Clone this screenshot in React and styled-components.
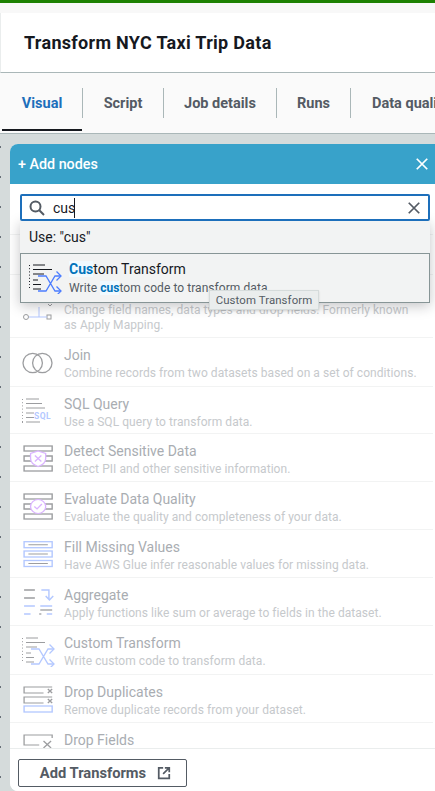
import React from "react";
import styled, { createGlobalStyle } from "styled-components";

const Global = createGlobalStyle`
  html, body { margin: 0; padding: 0; height: 100%; overflow: hidden; background: #fff; }
  #root { height: 791px; }
  * { box-sizing: border-box; }
`;

const FONT = `Roboto, "Liberation Sans", Arial, sans-serif`;

const Page = styled.div`
  width: 435px; height: 791px; overflow: hidden; display: flex; flex-direction: column;
  font-family: ${FONT}; color: #16191f; background: #fff;
`;
const GreenBar = styled.div`height: 3px; flex: none; background: #1d8102;`;
const Strip = styled.div`height: 10px; flex: none; background: #f8f8f8;`;
const TitleBar = styled.header`
  height: 60px; flex: none; padding: 0 0 0 23px; display: flex; align-items: center;
  border-left: 1px solid #eaeded; border-bottom: 1px solid #aab7b8; background: #fff;
`;
const Title = styled.h1`margin: 0; font-size: 18px; letter-spacing: .3px; font-weight: 700; line-height: 24px; color: #16191f; white-space: nowrap;`;
const Tabs = styled.nav`
  height: 61px; flex: none; display: flex; align-items: flex-start; padding: 15px 0 0 2px; overflow: hidden;
  background: #fafafa; border-bottom: 1px solid #aab7b8; position: relative;
`;
const Tab = styled.div`
  height: 30px; flex: none; width: ${p => p.$w}px; display: flex; align-items: center; justify-content: ${p => (p.$last ? "flex-start" : "center")};
  padding-left: ${p => (p.$last ? 21 : 0)}px;
  font-size: 14.5px; font-weight: 700; white-space: nowrap;
  color: ${p => (p.$active ? "#1d6fbb" : "#545b64")};
  border-right: ${p => (p.$last ? "none" : "1px solid #aab7b8")};
  position: relative;
  ${p => p.$active && `&::after { content: ""; position: absolute; left: 0; right: 0; top: 41px; height: 2px; background: #16191f; }`}
`;
const Canvas = styled.main`
  flex: 1; min-height: 0; padding: 10px 0 0 10px; background-color: #d5dbdb;
  background-image: radial-gradient(circle at 1px 1px, #687078 0.8px, transparent 1px);
  background-size: 435px 30px; background-position: -1px 12px;
`;
const Panel = styled.section`
  height: 647px; width: 425px; background: #fff; border-radius: 8px 0 0 8px; display: flex; flex-direction: column;
  overflow: hidden; position: relative;
`;
const PanelHead = styled.div`
  height: 40px; flex: none; background: #38a2ca; color: #fff; display: flex; align-items: center; justify-content: space-between;
  padding: 0 6px 0 8px; font-size: 14.3px; font-weight: 500;
`;
const Body = styled.div`flex: 1; min-height: 0; position: relative; overflow: hidden;`;
const SearchBox = styled.div`
  position: absolute; left: 10px; top: 10px; width: 410px; height: 27px; z-index: 3; background: #fff;
  border: 2px solid #1d6fbb; border-radius: 2px; display: flex; align-items: center; padding: 0 7px;
`;
const SearchText = styled.span`
  margin-left: 8px; font-size: 14px; line-height: 20px; color: #16191f; border-right: 1.5px solid #16191f; flex: 1 0 auto; max-width: 22px;
`;
const ClearBtn = styled.span`margin-left: auto; display: flex;`;
const Dropdown = styled.div`
  position: absolute; left: 10px; top: 37px; width: 410px; height: 82px; z-index: 2; background: #f2f3f3;
  box-shadow: 0 3px 12px rgba(22, 25, 31, 0.25);
`;
const UseRow = styled.div`
  height: 32px; padding: 0 0 0 9px; display: flex; align-items: center; font-size: 14px; color: #16191f;
`;
const Selected = styled.div`
  height: 50px; border: 1px solid #879596; display: flex; align-items: flex-start; padding: 6px 0 0 8px; background: #f2f3f3;
`;
const SelIcon = styled.div`width: 32px; flex: none; margin-right: 8px; margin-top: 4px;`;
const Mark = styled.mark`background: #f1faff; color: #0073bb; font-weight: 700;`;
const SelTitle = styled.div`font-size: 14px; line-height: 18px; color: #16191f; white-space: nowrap;`;
const SelDesc = styled.div`font-size: 12px; letter-spacing: .06px; line-height: 18px; color: #545b64; white-space: nowrap; margin-top: 1px;`;
const Tooltip = styled.div`
  position: absolute; left: 199px; top: 106px; width: 110px; height: 20px; z-index: 4; background: #eaeded;
  border: 1px solid #d5dbdb; display: flex; align-items: center; justify-content: center; font-size: 11.4px; color: #545b64; white-space: nowrap; letter-spacing: .1px;
  box-shadow: 0 1px 2px rgba(0,0,0,.12);
`;
const List = styled.div`height: 100%;`;
const Row = styled.div`
  height: ${p => p.$h}px; flex: none; display: flex; padding: 8px 0 0 12px; border-bottom: 1px solid #f2f3f3; margin-right: 2px;
`;
const RowIcon = styled.div`width: 32px; flex: none; margin-right: 10px; opacity: .42; margin-top: ${p => p.$mt}px;`;
const RowTitle = styled.div`font-size: 14px; line-height: 18px; color: #a9adb2; white-space: nowrap;`;
const RowDesc = styled.div`font-size: 12px; letter-spacing: .06px; line-height: 15px; color: #c6c9cc; margin-top: 2px; max-width: 358px;`;
const Footer = styled.div`
  height: 43.5px; flex: none; border-top: 1px solid #eaeded; padding: 10px 0 0 8px; background: #fff;
`;
const AddBtn = styled.button`
  width: 169px; height: 28px; border: 1px solid #545b64; border-radius: 2px; background: #fff; color: #545b64; font-family: ${FONT};
  font-size: 14.7px; font-weight: 700; display: flex; align-items: center; justify-content: center; gap: 11px; padding: 0 0 0 6px;
`;

const X = ({ size = 16, w = 2, c = "#fff" }) => (
  <svg width={size} height={size} viewBox="0 0 16 16" fill="none" stroke={c} strokeWidth={w}><path d="M2 2l12 12M14 2L2 14" /></svg>
);

const D = "#16191f";
const B = "#4c7dff";
const P = "#a94dff";
const WIDE = "translate(1 0) scale(1.08 1)";
const Svg = ({ children, wide }) => (
  <svg width="34" height="30" viewBox="0 0 34 30" fill="none" strokeWidth="1" style={{ display: "block" }}>
    <g transform={wide ? WIDE : undefined}>{children}</g>
  </svg>
);

const TransformIcon = () => (
  <Svg>
    <g stroke={D}>
      <path d="M0.5 1v20" strokeDasharray="1 2.2" />
      <path d="M4 1h12M4 5.5h19M4 10h11M4 16h5M4 20.5h8M4 25h8" />
      <path d="M0.5 23v3" strokeDasharray="1 2" />
    </g>
    <g stroke={B} strokeWidth="1.3">
      <path d="M9 12h8l9 15h6M9 27h8l9-15h6" />
      <path d="M27.5 7.5l4.5 4.5-4.5 4.5M27.5 22.5l4.5 4.5-4.5 4.5" />
    </g>
  </Svg>
);
const SchemaIcon = () => (
  <Svg>
    <g stroke={D}><circle cx="4" cy="25" r="2.5" /><rect x="25" y="23" width="4" height="4" /><path d="M26 12l2 2 2-2" /></g>
    <path d="M7 25h18M17 15v10" stroke={B} />
  </Svg>
);
const JoinIcon = () => (
  <Svg><g stroke={D} strokeWidth="1.3"><circle cx="10.7" cy="14" r="9.7" /><circle cx="20.3" cy="14" r="9.7" /></g></Svg>
);
const SqlIcon = () => (
  <Svg>
    <g stroke={D}><path d="M0.5 1v20" strokeDasharray="1 2.2" /><path d="M4 1h13M4 5.5h16M4 10h19M4 15h8M4 19.5h8M4 24h14" /><path d="M0.5 23v2" /></g>
    <text x="12" y="21" fill={B} fontSize="8.5" fontWeight="700" fontFamily={FONT} letterSpacing=".4">SQL</text>
  </Svg>
);
const SensitiveIcon = () => (
  <Svg wide>
    <g stroke={D} strokeWidth="1.3"><rect x="1" y="1" width="26" height="5" /><rect x="1" y="21" width="26" height="5" /><path d="M8 11H1v5h7M20 11h7v5h-7" /></g>
    <path d="M14 6l7 2.5v5c0 4-3 6.5-7 8-4-1.5-7-4-7-8v-5z" stroke={P} strokeWidth="1.2" fill="#fff" />
    <path d="M11 10.5l6 6M17 10.5l-6 6" stroke={P} strokeWidth="1.2" />
  </Svg>
);
const QualityIcon = () => (
  <Svg wide>
    <g stroke={D} strokeWidth="1.3"><rect x="1" y="1" width="26" height="5" /><rect x="1" y="21" width="26" height="5" /><path d="M8 11H1v5h7M20 11h7v5h-7" /></g>
    <circle cx="14" cy="13.5" r="7" stroke={P} strokeWidth="1.2" fill="#fff" />
    <path d="M10.5 13.5l2.5 2.5 4.5-5" stroke={P} strokeWidth="1.2" />
  </Svg>
);
const FillIcon = () => (
  <Svg wide>
    <g stroke={B} strokeWidth="1.3"><rect x="1" y="0.7" width="26" height="6" /><rect x="1" y="10" width="26" height="6" /><rect x="1" y="19.5" width="26" height="6" /></g>
    <g stroke={D}><path d="M5 3.7h18M5 13h18M5 22.5h18" /></g>
  </Svg>
);
const AggIcon = () => (
  <Svg wide>
    <path d="M1 1h10M1 9h10" stroke={D} strokeWidth="1.3" />
    <path d="M1 17h10M1 25h6" stroke={B} strokeWidth="1.3" />
    <path d="M15 25h2" stroke={D} strokeWidth="1.3" />
    <path d="M16 17h11M22 25h5" stroke={B} strokeWidth="1.3" />
    <path d="M17 1h7v9M21 7l3.5 4 3.5-4" stroke={B} strokeWidth="1.3" />
    <path d="M16 21h11" stroke={D} strokeWidth="1.3" />
  </Svg>
);
const DupIcon = () => (
  <Svg wide>
    <g stroke={D} strokeWidth="1.2"><path d="M19 7H1V1h26M19 17H1v-6h26" /><path d="M23 3l4 4M27 3l-4 4M23 13l4 4M27 13l-4 4" /></g>
    <rect x="1" y="20" width="26" height="6" stroke={B} strokeWidth="1.3" />
  </Svg>
);
const DropIcon = () => (
  <Svg wide>
    <g stroke={D} strokeWidth="1.2"><path d="M15 11H1V1h26v3" /><path d="M19 7l7 7M26 7l-7 7" /></g>
  </Svg>
);

const rows = [
  { h: 51, title: "", desc: "" },
  { h: 40, title: "", desc: "" },
  { h: 63, mt: 9, title: "Change Schema", desc: "Change field names, data types and drop fields. Formerly known as Apply Mapping.", icon: <SchemaIcon /> },
  { h: 49, title: "Join", desc: "Combine records from two datasets based on a set of conditions.", icon: <JoinIcon /> },
  { h: 47, title: "SQL Query", desc: "Use a SQL query to transform data.", icon: <SqlIcon /> },
  { h: 48, title: "Detect Sensitive Data", desc: "Detect PII and other sensitive information.", icon: <SensitiveIcon /> },
  { h: 48, title: "Evaluate Data Quality", desc: "Evaluate the quality and completeness of your data.", icon: <QualityIcon /> },
  { h: 48, title: "Fill Missing Values", desc: "Have AWS Glue infer reasonable values for missing data.", icon: <FillIcon /> },
  { h: 48, title: "Aggregate", desc: "Apply functions like sum or average to fields in the dataset.", icon: <AggIcon /> },
  { h: 49, title: "Custom Transform", desc: "Write custom code to transform data.", icon: <TransformIcon /> },
  { h: 48, title: "Drop Duplicates", desc: "Remove duplicate records from your dataset.", icon: <DupIcon /> },
  { h: 48, title: "Drop Fields", desc: "", icon: <DropIcon /> },
];

const tabs = [
  { label: "Visual", w: 81, active: true },
  { label: "Script", w: 81 },
  { label: "Job details", w: 113 },
  { label: "Runs", w: 74 },
  { label: "Data quality", w: 100, last: true },
];

export default function App() {
  return (
    <Page>
      <Global />
      <GreenBar />
      <Strip />
      <TitleBar><Title>Transform NYC Taxi Trip Data</Title></TitleBar>
      <Tabs>
        {tabs.map(t => <Tab key={t.label} $w={t.w} $active={t.active} $last={t.last}>{t.label}</Tab>)}
      </Tabs>
      <Canvas>
        <Panel>
          <PanelHead>
            <span>+ Add nodes</span>
            <X size={14} />
          </PanelHead>
          <Body>
            <List>
              {rows.map((r, i) => (
                <Row key={i} $h={r.h}>
                  <RowIcon $mt={r.mt ?? 3}>{r.icon}</RowIcon>
                  <div>
                    <RowTitle>{r.title}</RowTitle>
                    <RowDesc>{r.desc}</RowDesc>
                  </div>
                </Row>
              ))}
            </List>
            <SearchBox>
              <svg width="16" height="16" viewBox="0 0 16 16" fill="none" stroke="#545b64" strokeWidth="2"><circle cx="6.5" cy="6.5" r="5" /><path d="M10.3 10.3L15 15" /></svg>
              <SearchText>cus</SearchText>
              <ClearBtn><X size={14} c="#545b64" /></ClearBtn>
            </SearchBox>
            <Dropdown>
              <UseRow>Use: "cus"</UseRow>
              <Selected>
                <SelIcon><TransformIcon /></SelIcon>
                <div>
                  <SelTitle><Mark>Cus</Mark>tom Transform</SelTitle>
                  <SelDesc>Write <Mark>cus</Mark>tom code to transform data.</SelDesc>
                </div>
              </Selected>
            </Dropdown>
            <Tooltip>Custom Transform</Tooltip>
          </Body>
          <Footer>
            <AddBtn>
              Add Transforms
              <svg width="14" height="14" viewBox="0 0 16 16" fill="none" stroke="#545b64" strokeWidth="2"><path d="M7 2H2v12h12V9" /><path d="M9 2h5v5M14 2L7 9" /></svg>
            </AddBtn>
          </Footer>
        </Panel>
      </Canvas>
    </Page>
  );
}
